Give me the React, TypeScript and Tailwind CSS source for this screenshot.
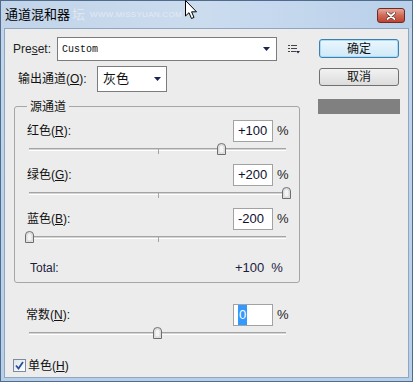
import React from "react";

const TRACK_W = 257;

function Slider({ value, className }: { value: number; className: string }) {
  // range -200..200 mapped across the track
  const center = ((value + 200) / 400) * TRACK_W;
  return (
    <div className={`relative h-[22px] w-[257px] ${className}`}>
      <div className="absolute left-0 right-0 top-[6px] h-[1px] bg-[#a4a4a4]" />
      <div className="absolute left-0 right-0 top-[7px] h-[1px] bg-[#d4d4d4]" />
      <div className="absolute left-0 right-0 top-[8px] h-[1px] bg-white" />
      <div className="absolute left-[129px] top-[6px] h-[6px] w-[1px] bg-[#a4a4a4]" />
      <svg
        viewBox="0 0 9 12"
        className="absolute top-[1px] h-[12px] w-[9px]"
        style={{ left: center - 4.5 }}
      >
        <path
          d="M0.5 11.5 V4 Q0.5 0.5 4.5 0.5 Q8.5 0.5 8.5 4 V11.5 Z"
          fill="#e6e6e6"
          stroke="#6e6e6e"
        />
        <path d="M2 10 V4.5 Q2 2 4.5 2 Q7 2 7 4.5 V10 Z" fill="#f4f4f4" stroke="#c8c8c8" strokeWidth="0.6" />
      </svg>
    </div>
  );
}

function NumBox({ value, selected }: { value: string; selected?: boolean }) {
  return (
    <div className="flex h-[22px] w-[40px] items-center border border-[#a2a2a2] bg-white pl-[4px] text-[13px] text-[#101030]">
      {selected ? <span className="bg-[#3399ff] px-[1px] text-white">{value}</span> : value}
    </div>
  );
}

function Channel({ label, hotkey, value, slider }: { label: string; hotkey: string; value: string; slider: number }) {
  return (
    <div>
      <div className="flex h-[22px] items-center pl-[12px]">
        <span className="w-[206px] text-[12px] text-[#111]">
          {label}(<span className="underline">{hotkey}</span>):
        </span>
        <NumBox value={value} />
        <span className="ml-[4px] text-[13px] text-[#222]">%</span>
      </div>
      <Slider value={slider} className="ml-[14px]" />
    </div>
  );
}

function Arrow({ className }: { className: string }) {
  return (
    <svg viewBox="0 0 7 4" className={`h-[4px] w-[7px] ${className}`}>
      <path d="M0 0 H7 L3.5 4 Z" fill="#1c2450" />
    </svg>
  );
}

export default function App() {
  return (
    <div className="relative flex h-[382px] w-[413px] flex-col border border-[#4f6c8c] bg-gradient-to-b from-[#c3d6eb] to-[#b7cfe9] font-['Liberation_Sans','Noto_Sans_CJK_SC',sans-serif]">
      {/* Title bar */}
      <div className="flex h-[27px] items-center bg-gradient-to-r from-[#c2d4e9] via-[#cbdcef] to-[#b9d0ea] pl-[4px]">
        <span className="text-[13px] text-black">通道混和器</span>
        <span className="ml-[2px] text-[13px] text-[#dfe7f1]">坛</span>
        <span className="ml-[5px] text-[8px] tracking-[0.3px] text-[#e3eaf3]">WWW.MISSYUAN.COM</span>
        <button
          type="button"
          aria-label="关闭"
          className="ml-auto mr-[7px] mt-[7px] flex h-[15px] w-[28px] items-center justify-center self-start rounded-[3px] border border-[#6f2a22] bg-gradient-to-b from-[#e6a89c] via-[#cf6a58] to-[#c0432f]"
        >
          <svg viewBox="0 0 10 8" className="h-[8px] w-[10px]">
            <path d="M1.5 1 L8.5 7 M8.5 1 L1.5 7" stroke="#5a2a24" strokeWidth="3" strokeLinecap="round" />
            <path d="M1.5 1 L8.5 7 M8.5 1 L1.5 7" stroke="#ffffff" strokeWidth="1.8" strokeLinecap="round" />
          </svg>
        </button>
      </div>

      {/* Body */}
      <div className="mx-[3px] mb-[3px] flex flex-1 items-start border border-[#8fa6c0] bg-[#ececec] pl-[8px] pt-[8px]">
        {/* Left column */}
        <div className="w-[288px]">
          <div className="flex h-[24px] items-center">
            <span className="w-[44px] text-[12px] text-[#222]">
              Pre<span className="underline">s</span>et:
            </span>
            <div className="flex h-[24px] w-[220px] items-center border border-[#7c7c7c] bg-white pl-[4px] pr-[6px] font-['Liberation_Mono',monospace] text-[10px] text-[#111]">
              <span className="flex-1">Custom</span>
              <Arrow className="" />
            </div>
            <svg viewBox="0 0 13 10" className="ml-[11px] h-[10px] w-[13px]">
              <rect x="0" y="1" width="2" height="1" fill="#444" />
              <rect x="3" y="1" width="6" height="1" fill="#444" />
              <rect x="0" y="4" width="2" height="1" fill="#444" />
              <rect x="3" y="4" width="6" height="1" fill="#444" />
              <rect x="0" y="7" width="2" height="1" fill="#444" />
              <rect x="3" y="7" width="5" height="1" fill="#444" />
              <path d="M8 7 H12 L10 9.5 Z" fill="#1c2450" />
            </svg>
          </div>

          <div className="mt-[5px] flex h-[26px] items-center pl-[5px]">
            <span className="w-[79px] text-[12px] text-[#111]">
              输出通道(<span className="underline">O</span>):
            </span>
            <div className="flex h-[26px] w-[70px] items-center border border-[#7c7c7c] bg-white pl-[5px] pr-[5px] text-[13px] text-[#111]">
              <span className="flex-1">灰色</span>
              <Arrow className="" />
            </div>
          </div>

          {/* 源通道 group */}
          <div className="relative ml-[1px] mt-[14px] h-[177px] w-[286px] rounded-[3px] border border-[#a6a6a6] pt-[13px]">
            <span className="absolute left-[12px] top-[-9px] bg-[#ececec] px-[3px] text-[12px] text-[#111]">源通道</span>
            <Channel label="红色" hotkey="R" value="+100" slider={100} />
            <Channel label="绿色" hotkey="G" value="+200" slider={200} />
            <Channel label="蓝色" hotkey="B" value="-200" slider={-200} />
            <div className="mt-[8px] flex h-[16px] items-center pl-[15px]">
              <span className="w-[205px] text-[12px] text-[#1c1c40]">Total:</span>
              <span className="text-[13px] text-[#1c1c40]">+100</span>
              <span className="ml-[7px] text-[13px] text-[#1c1c40]">%</span>
            </div>
          </div>

          {/* 常数 */}
          <div className="mt-[21px] flex h-[22px] items-center pl-[13px]">
            <span className="w-[207px] text-[12px] text-[#111]">
              常数(<span className="underline">N</span>):
            </span>
            <NumBox value="0" selected />
            <span className="ml-[4px] text-[13px] text-[#222]">%</span>
          </div>
          <Slider value={0} className="ml-[16px]" />

          <div className="mt-[11px] flex h-[13px] items-center">
            <div className="flex h-[13px] w-[13px] items-center justify-center border border-[#7a8ba3] bg-gradient-to-br from-[#dfe4ea] to-white">
              <svg viewBox="0 0 9 9" className="h-[9px] w-[9px]">
                <path d="M1 4.5 L3.5 7.5 L8 1" fill="none" stroke="#2a4d9a" strokeWidth="1.8" />
              </svg>
            </div>
            <span className="ml-[2px] text-[12px] text-[#111]">
              单色(<span className="underline">H</span>)
            </span>
          </div>
        </div>

        {/* Right column */}
        <div className="ml-[17px] mt-[2px] flex w-[82px] flex-col">
          <button
            type="button"
            className="ml-[1px] h-[19px] w-[80px] rounded-[3px] border border-[#3c7fb1] bg-gradient-to-b from-[#eaf6fd] to-[#d0e9f8] text-[12px] leading-none text-[#111] shadow-[inset_0_0_0_1px_#a8dcf7]"
          >
            确定
          </button>
          <button
            type="button"
            className="ml-[1px] mt-[10px] h-[18px] w-[80px] rounded-[3px] border border-[#707070] bg-gradient-to-b from-[#f2f2f2] to-[#dcdcdc] text-[12px] leading-none text-[#111]"
          >
            取消
          </button>
          <div className="mt-[13px] h-[15px] w-[82px] bg-[#808080]" />
        </div>
      </div>

      {/* Mouse pointer */}
      <svg viewBox="0 0 13 20" className="absolute left-[184px] top-[-1px] h-[20px] w-[13px]">
        <path d="M0.5 0.5 V16 L4 12.7 L6.5 18.5 L9 17.4 L6.6 11.8 L11.5 11.8 Z" fill="#fff" stroke="#000" />
      </svg>
    </div>
  );
}
